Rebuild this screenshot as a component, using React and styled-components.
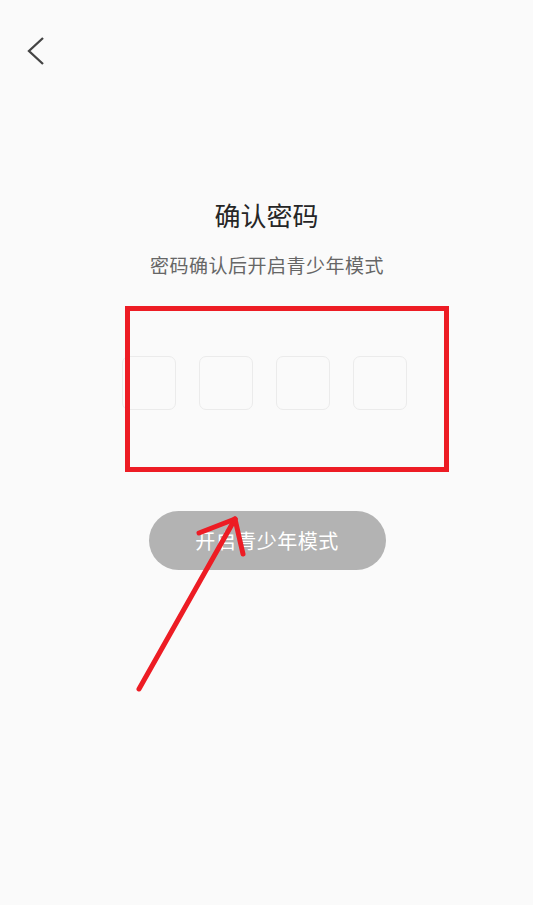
import React from 'react';
import styled, { createGlobalStyle } from 'styled-components';

const GlobalStyle = createGlobalStyle`
  html, body {
    margin: 0;
    padding: 0;
    background: #fafafa;
  }
  body {
    font-family: "Noto Sans CJK SC", "Noto Sans", sans-serif;
  }
`;

const Page = styled.div`
  position: relative;
  width: 533px;
  height: 905px;
  overflow: hidden;
  background: #fafafa;
  display: flex;
  flex-direction: column;
`;

const Header = styled.div`
  height: 100px;
  padding: 36px 0 0 26px;
  box-sizing: border-box;
`;

const BackButton = styled.button`
  display: flex;
  padding: 0;
  border: 0;
  background: transparent;
  cursor: pointer;
`;

const Content = styled.div`
  display: flex;
  flex-direction: column;
  align-items: center;
  padding-top: 97px;
`;

const Title = styled.h1`
  margin: 0;
  font-size: 26px;
  line-height: 36px;
  font-weight: 400;
  color: #262626;
`;

const Subtitle = styled.p`
  margin: 19px 0 0;
  font-size: 19px;
  line-height: 26px;
  letter-spacing: 0.5px;
  color: #666;
  padding-left: 1px;
`;

const CodeRow = styled.div`
  display: flex;
  gap: 23px;
  margin-top: 78px;
  margin-right: 4px;
`;

const CodeBox = styled.div`
  width: 54px;
  height: 54px;
  box-sizing: border-box;
  border: 1px solid #ebebeb;
  border-radius: 7px;
  background: #fafafa;
`;

const SubmitButton = styled.button`
  margin-top: 101px;
  width: 237px;
  height: 59px;
  border: 0;
  border-radius: 30px;
  background: #b3b3b3;
  color: #fff;
  font-family: inherit;
  font-size: 20px;
  letter-spacing: 0.5px;
  margin-right: -1px;
`;

const HighlightBox = styled.div`
  position: absolute;
  left: 125px;
  top: 306px;
  width: 324px;
  height: 166px;
  box-sizing: border-box;
  border: 5px solid #ed1c24;
  pointer-events: none;
`;

const ArrowLayer = styled.svg`
  position: absolute;
  left: 0;
  top: 0;
  pointer-events: none;
`;

function App() {
  return (
    <Page>
      <GlobalStyle />
      <Header>
        <BackButton aria-label="返回">
          <svg width="20" height="30" viewBox="0 0 20 30">
            <polyline
              points="17,2 3,15 17,28"
              fill="none"
              stroke="#444"
              strokeWidth="2.3"
            />
          </svg>
        </BackButton>
      </Header>
      <Content>
        <Title>确认密码</Title>
        <Subtitle>密码确认后开启青少年模式</Subtitle>
        <CodeRow>
          <CodeBox />
          <CodeBox />
          <CodeBox />
          <CodeBox />
        </CodeRow>
        <SubmitButton disabled>开启青少年模式</SubmitButton>
      </Content>
      <HighlightBox />
      <ArrowLayer width="533" height="905" viewBox="0 0 533 905">
        <g stroke="#ed1c24" strokeWidth="5" strokeLinecap="round" fill="none">
          <line x1="139" y1="689" x2="235" y2="519" />
          <line x1="199" y1="533" x2="235" y2="519" />
          <line x1="243" y1="554" x2="235" y2="519" />
        </g>
      </ArrowLayer>
    </Page>
  );
}

export default App;
